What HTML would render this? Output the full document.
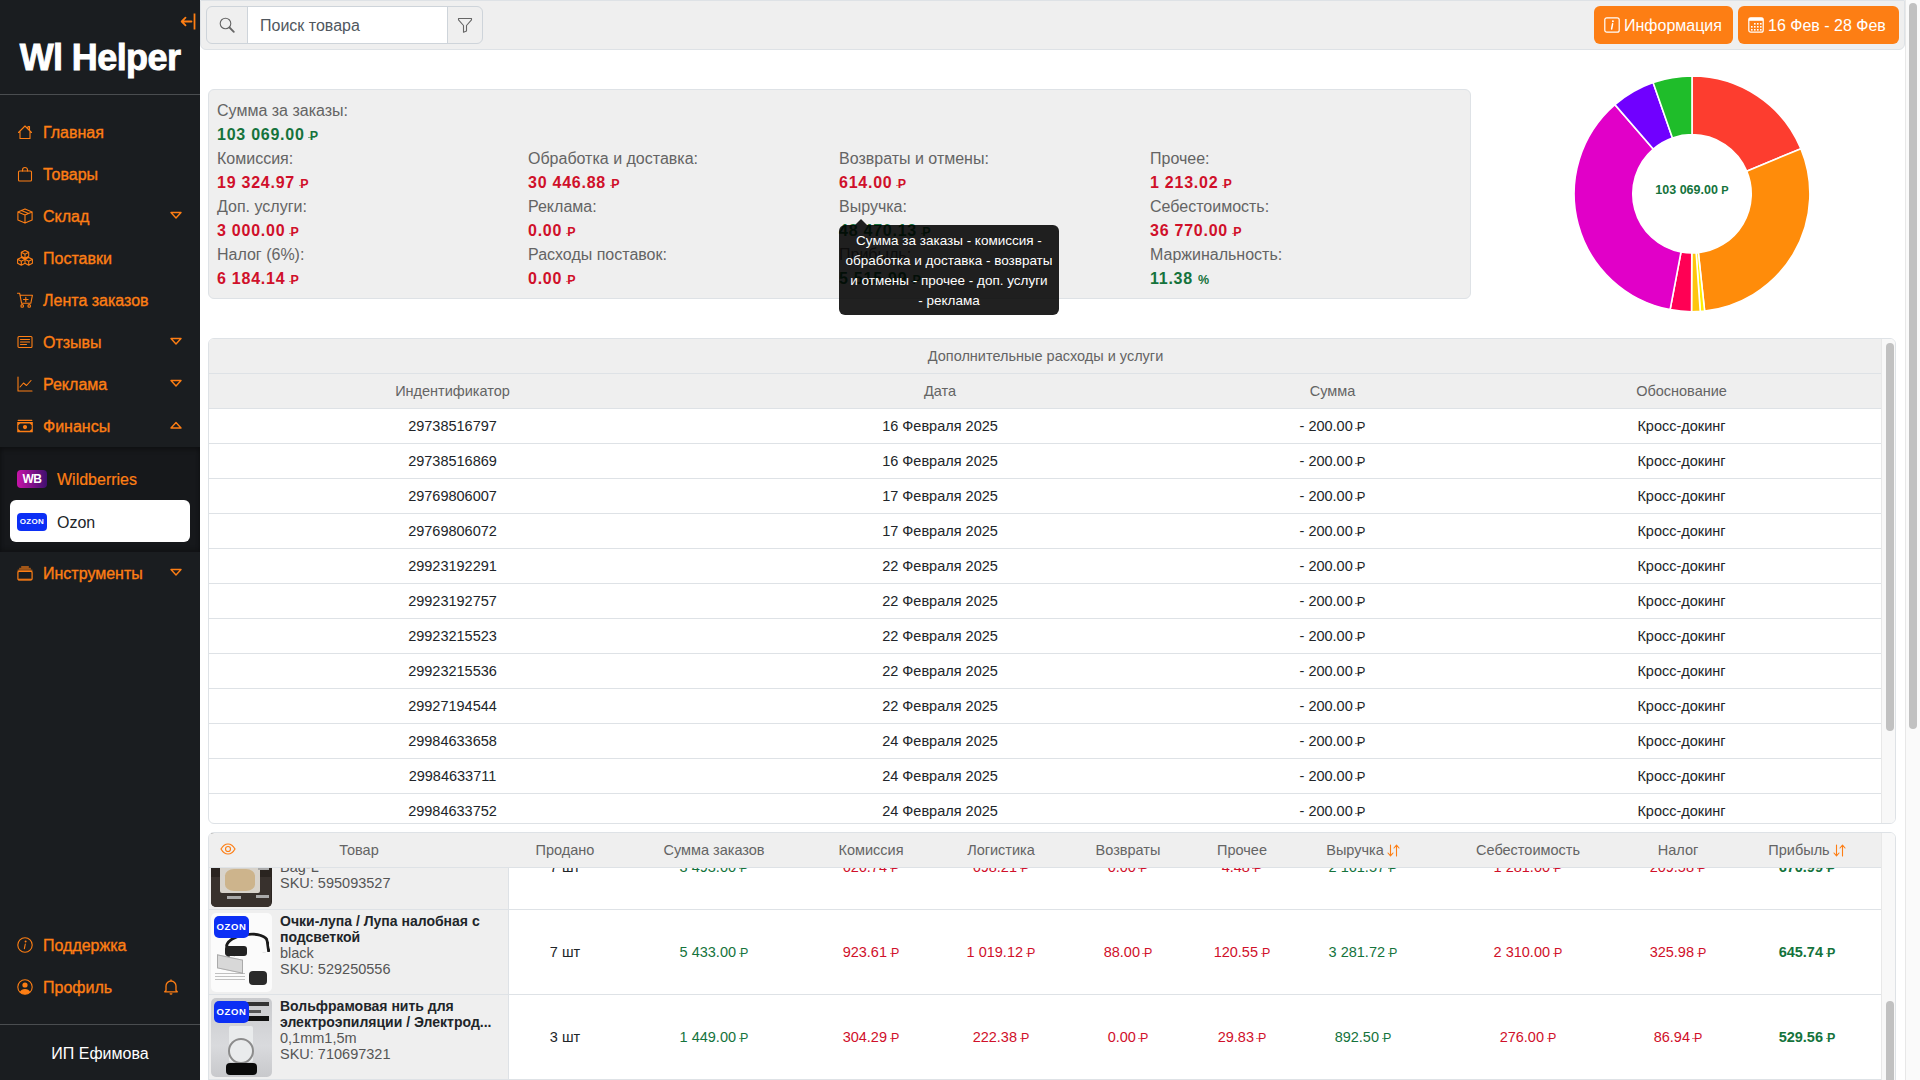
<!DOCTYPE html><html lang="ru"><head><meta charset="utf-8"><title>Wl Helper</title><style>
*{box-sizing:border-box;margin:0;padding:0}
html,body{width:1920px;height:1080px;overflow:hidden;background:#fff;font-family:"Liberation Sans",sans-serif;color:#212529}
.abs{position:absolute}
#sb{position:absolute;left:0;top:0;width:200px;height:1080px;background:#1a1d20}
#sb .logo{position:absolute;left:0;top:35px;width:200px;text-align:center;color:#fff;font-weight:700;font-size:36px;line-height:46px;letter-spacing:-0.6px;-webkit-text-stroke:0.9px #fff}
#sb .hr{position:absolute;left:0;width:200px;height:1px;background:#4a4d50}
.nav{position:absolute;left:0;width:200px;height:42px;color:#fd7e14;font-size:16px;line-height:42px}
.nav svg.ic{position:absolute;left:17px;top:13px}
.nav .tx{position:absolute;left:43px;top:1px;-webkit-text-stroke:0.35px #fd7e14;white-space:nowrap}
.nav svg.car{position:absolute;left:170px;top:16px}
#sub{position:absolute;left:0;top:447px;width:200px;height:105px;background:#16181b;box-shadow:inset 0 3px 4px rgba(0,0,0,.3), inset 0 -3px 4px rgba(0,0,0,.2)}
#hdr{position:absolute;left:200px;top:0;width:1705px;height:50px;background:#efefef;border:1px solid #dee2e6;border-radius:0 0 6px 6px}
.btn{position:absolute;top:6px;height:38px;background:#fd7e14;border-radius:6px;color:#fff;font-size:16px;line-height:40px;white-space:nowrap}
#card{position:absolute;left:208px;top:89px;width:1263px;height:210px;background:#efefef;border:1px solid #dee2e6;border-radius:6px}
.lb{position:absolute;font-size:16px;line-height:24px;color:#646464;white-space:nowrap}
.vl{position:absolute;font-size:16px;line-height:24px;font-weight:700;white-space:nowrap;letter-spacing:0.75px}
.g{color:#15733c}.r{color:#d0102a}
.rub{position:relative;font-size:12.5px;font-weight:700;letter-spacing:0}
.rub::after{content:"";position:absolute;left:-0.12em;width:0.5em;bottom:0.42em;height:1px;background:currentColor;opacity:.55}
.pct::after{display:none}
.tbox{position:absolute;left:208px;width:1688px;border:1px solid #dee2e6;border-radius:6px;overflow:hidden;background:#fff}
.row{position:absolute;left:0;border-bottom:1px solid #dee2e6}
.c{position:absolute;top:0;text-align:center;white-space:nowrap;font-size:14.5px}
.sbar{position:absolute;background:#f8f8f8;border-left:1px solid #e8e8e8}
.thumb{position:absolute;background:#c1c1c1;border-radius:4px}
#psb{position:absolute;left:1905px;top:0;width:15px;height:1080px;background:#fafafa;border-left:1px solid #e8e8e8}
#psb .th{position:absolute;left:3px;top:3px;width:8px;height:726px;background:#c1c1c1;border-radius:4px}
</style></head><body>
<div id="sb">
<svg class="abs" style="left:180px;top:13px" width="16" height="17" viewBox="0 0 16 17"><path d="M14.5 0.5v16" stroke="#fd7e14" stroke-width="1.8" fill="none"/><path d="M11.5 8.5H2M5.5 4.7L1.7 8.5L5.5 12.3" stroke="#fd7e14" stroke-width="1.8" fill="none" stroke-linecap="round" stroke-linejoin="round"/></svg>
<div class="logo">Wl Helper</div>
<div class="hr" style="top:94px"></div>
<div id="sub"></div>
<div class="nav" style="top:111px"><svg class="ic" width="16" height="16" viewBox="0 0 16 16"><path d="M1.5 8.5L8 2l6.5 6.5M3 7v7.5h10V7M11 4V2.5h1.5v3" stroke="#fd7e14" stroke-width="1.1" fill="none" stroke-linecap="round" stroke-linejoin="round"/></svg><span class="tx">Главная</span></div>
<div class="nav" style="top:153px"><svg class="ic" width="16" height="16" viewBox="0 0 16 16"><rect x="1.5" y="5" width="13" height="10" rx="1" stroke="#fd7e14" stroke-width="1.1" fill="none" stroke-linecap="round" stroke-linejoin="round"/><path d="M5.5 5V4a2.5 2.5 0 0 1 5 0v1" stroke="#fd7e14" stroke-width="1.1" fill="none" stroke-linecap="round" stroke-linejoin="round"/></svg><span class="tx">Товары</span></div>
<div class="nav" style="top:195px"><svg class="ic" width="16" height="16" viewBox="0 0 16 16"><path d="M8 0.9L15.1 3.9V12.1L8 15.1 0.9 12.1V3.9z M0.9 3.9L8 6.9 15.1 3.9 M8 6.9V15.1 M4.4 2.4L11.6 5.4" stroke="#fd7e14" stroke-width="1.1" fill="none" stroke-linecap="round" stroke-linejoin="round"/></svg><span class="tx">Склад</span><svg class="car" width="12" height="9" viewBox="0 0 12 9"><path d="M1 1.5h10L6 7z" stroke="#fd7e14" stroke-width="1.4" fill="none" stroke-linejoin="round"/></svg></div>
<div class="nav" style="top:237px"><svg class="ic" width="16" height="16" viewBox="0 0 16 16"><path d="M8 0.3999999999999999L11.7 2.3499999999999996V6.25L8 8.2L4.3 6.25V2.3499999999999996z M4.3 2.3499999999999996L8 4.3L11.7 2.3499999999999996 M8 4.3V8.2 M4.3 7.4L8.0 9.350000000000001V13.25L4.3 15.200000000000001L0.5999999999999996 13.25V9.350000000000001z M0.5999999999999996 9.350000000000001L4.3 11.3L8.0 9.350000000000001 M4.3 11.3V15.200000000000001 M11.7 7.4L15.399999999999999 9.350000000000001V13.25L11.7 15.200000000000001L7.999999999999999 13.25V9.350000000000001z M7.999999999999999 9.350000000000001L11.7 11.3L15.399999999999999 9.350000000000001 M11.7 11.3V15.200000000000001" stroke="#fd7e14" stroke-width="1.1" fill="none" stroke-linecap="round" stroke-linejoin="round"/></svg><span class="tx">Поставки</span></div>
<div class="nav" style="top:279px"><svg class="ic" width="16" height="16" viewBox="0 0 16 16"><path d="M0.5 1.3h2.2l1.9 10h9.2l1.6-8H3.1 M8.8 5.2v4.6M6.5 7.5h4.6" stroke="#fd7e14" stroke-width="1.1" fill="none" stroke-linecap="round" stroke-linejoin="round"/><circle cx="5.2" cy="13.9" r="1.3" stroke="#fd7e14" stroke-width="1.1" fill="none" stroke-linecap="round" stroke-linejoin="round"/><circle cx="12.2" cy="13.9" r="1.3" stroke="#fd7e14" stroke-width="1.1" fill="none" stroke-linecap="round" stroke-linejoin="round"/></svg><span class="tx">Лента заказов</span></div>
<div class="nav" style="top:321px"><svg class="ic" width="16" height="16" viewBox="0 0 16 16"><rect x="1" y="2.5" width="14" height="11" rx="1" stroke="#fd7e14" stroke-width="1.1" fill="none" stroke-linecap="round" stroke-linejoin="round"/><path d="M3.5 5.5h9M3.5 8h9M3.5 10.5h6" stroke="#fd7e14" stroke-width="1.1" fill="none" stroke-linecap="round" stroke-linejoin="round"/></svg><span class="tx">Отзывы</span><svg class="car" width="12" height="9" viewBox="0 0 12 9"><path d="M1 1.5h10L6 7z" stroke="#fd7e14" stroke-width="1.4" fill="none" stroke-linejoin="round"/></svg></div>
<div class="nav" style="top:363px"><svg class="ic" width="16" height="16" viewBox="0 0 16 16"><path d="M1 1v14h14 M3 11l3.5-4 3 2.5L14 4.5" stroke="#fd7e14" stroke-width="1.1" fill="none" stroke-linecap="round" stroke-linejoin="round"/></svg><span class="tx">Реклама</span><svg class="car" width="12" height="9" viewBox="0 0 12 9"><path d="M1 1.5h10L6 7z" stroke="#fd7e14" stroke-width="1.4" fill="none" stroke-linejoin="round"/></svg></div>
<div class="nav" style="top:405px"><svg class="ic" style="top:14px" width="16" height="16" viewBox="0 0 16 16"><path d="M1.2 1.4H14.8" stroke="#fd7e14" stroke-width="1.2" stroke-linecap="round"/><path fill-rule="evenodd" fill="#fd7e14" d="M0.2 3H15.8V13.2H0.2z M3.2 4.4H12.8L14.7 6.2V10L12.8 11.8H3.2L1.3 10V6.2z"/><circle cx="8" cy="8.1" r="2.1" fill="#fd7e14"/></svg><span class="tx">Финансы</span><svg class="car" width="12" height="9" viewBox="0 0 12 9"><path d="M1 7L6 1.5 11 7z" stroke="#fd7e14" stroke-width="1.4" fill="none" stroke-linejoin="round"/></svg></div>
<div class="nav" style="top:552px"><svg class="ic" width="16" height="16" viewBox="0 0 16 16"><g fill="#fd7e14" opacity=".6"><rect x="4.2" y="1" width="7.6" height="2"/><rect x="2.2" y="2.8" width="11.6" height="2"/><rect x="0.6" y="4.6" width="14.8" height="2.2"/><rect x="1" y="13.6" width="14" height="1.8" rx=".8"/></g><rect x="0.9" y="6.3" width="14.2" height="8.6" rx="1.2" stroke="#fd7e14" stroke-width="1.2" fill="none"/></svg><span class="tx">Инструменты</span><svg class="car" width="12" height="9" viewBox="0 0 12 9"><path d="M1 1.5h10L6 7z" stroke="#fd7e14" stroke-width="1.4" fill="none" stroke-linejoin="round"/></svg></div>
<div class="nav" style="top:924px"><svg class="ic" width="16" height="16" viewBox="0 0 16 16"><circle cx="8" cy="8" r="7.2" stroke="#fd7e14" stroke-width="1.1" fill="none" stroke-linecap="round" stroke-linejoin="round"/><path d="M8.3 7l-.9 4.6" stroke="#fd7e14" stroke-width="1.1" fill="none" stroke-linecap="round" stroke-linejoin="round" stroke-width="1.6"/><circle cx="8.6" cy="4.6" r="1" fill="#fd7e14"/></svg><span class="tx">Поддержка</span></div>
<div class="nav" style="top:966px"><svg class="ic" width="16" height="16" viewBox="0 0 16 16"><circle cx="8" cy="8" r="7.2" stroke="#fd7e14" stroke-width="1.1" fill="none" stroke-linecap="round" stroke-linejoin="round"/><circle cx="8" cy="6" r="2.6" fill="#fd7e14"/><path d="M2.8 13c1-2 2.8-3 5.2-3s4.2 1 5.2 3A7 7 0 0 1 2.8 13z" fill="#fd7e14"/></svg><span class="tx">Профиль</span></div>
<svg class="abs" style="left:163px;top:978px" width="16" height="17" viewBox="0 0 16 17"><path d="M3 12.5V8a5 5 0 0 1 10 0v4.5l1.3 1.3H1.7z M8 1.5v1.5" stroke="#fd7e14" stroke-width="1.3" fill="none" stroke-linejoin="round"/><path d="M6.5 15.2a1.5 1.5 0 0 0 3 0z" fill="#fd7e14"/></svg>
<div class="abs" style="left:17px;top:470px;width:30px;height:18px;border-radius:4px;background:linear-gradient(90deg,#c614a8,#3f0f6e);color:#fff;font-size:12px;font-weight:700;line-height:18px;text-align:center;letter-spacing:-0.5px">WB</div>
<div class="abs" style="left:57px;top:468px;color:#fd7e14;font-size:16px;line-height:24px;-webkit-text-stroke:0.2px #fd7e14">Wildberries</div>
<div class="abs" style="left:10px;top:500px;width:180px;height:42px;background:#fff;border-radius:6px"></div>
<div class="abs" style="left:17px;top:513px;width:30px;height:18px;border-radius:4px;background:#0c2ff5;color:#fff;font-size:8px;font-weight:700;line-height:18px;text-align:center;letter-spacing:0.3px">OZON</div>
<div class="abs" style="left:57px;top:511px;color:#212529;font-size:16px;line-height:24px">Ozon</div>
<div class="hr" style="top:1024px"></div>
<div class="abs" style="left:0;top:1042px;width:200px;text-align:center;color:#fff;font-size:16px;line-height:24px">ИП Ефимова</div>
</div>
<div id="hdr"></div>
<div class="abs" style="left:206px;top:6px;width:277px;height:38px;border:1px solid #ced4da;border-radius:6px;background:#efefef"></div>
<div class="abs" style="left:247px;top:6px;width:201px;height:38px;border:1px solid #ced4da;background:#fff"></div>
<svg class="abs" style="left:219px;top:17px" width="16" height="16" viewBox="0 0 16 16"><circle cx="6.5" cy="6.5" r="5.3" stroke="#666" stroke-width="1.1" fill="none"/><path d="M10.5 10.5L14.8 14.8" stroke="#666" stroke-width="1.8" stroke-linecap="round"/></svg>
<div class="abs" style="left:260px;top:14px;font-size:16px;line-height:24px;color:#50575e;white-space:nowrap">Поиск товара</div>
<svg class="abs" style="left:457px;top:17px" width="16" height="16" viewBox="0 0 16 16"><path d="M1.5 1.5h13v1.3L9.5 8.5v5.5l-3 1.3V8.5L1.5 2.8z" stroke="#666" stroke-width="1.1" fill="none" stroke-linejoin="round"/></svg>
<div class="btn" style="left:1594px;width:139px"><svg class="abs" style="left:10px;top:11px" width="16" height="16" viewBox="0 0 16 16"><rect x="0.8" y="0.8" width="14.4" height="14.4" rx="2" stroke="#fff" stroke-width="1.2" fill="none"/><path d="M8.6 6.8L7.6 12" stroke="#fff" stroke-width="1.5" stroke-linecap="round"/><circle cx="8.9" cy="4.3" r="0.95" fill="#fff"/></svg><span class="abs" style="left:30px;top:0">Информация</span></div>
<div class="btn" style="left:1738px;width:161px"><svg class="abs" style="left:10px;top:11px" width="16" height="16" viewBox="0 0 16 16"><rect x="0.8" y="0.8" width="14.4" height="14.4" rx="2" stroke="#fff" stroke-width="1.2" fill="none"/><rect x="0.8" y="0.8" width="14.4" height="3" fill="#fff"/><rect x="6" y="6" width="1.6" height="1.6" fill="#fff"/><rect x="9" y="6" width="1.6" height="1.6" fill="#fff"/><rect x="12" y="6" width="1.6" height="1.6" fill="#fff"/><rect x="3" y="9" width="1.6" height="1.6" fill="#fff"/><rect x="6" y="9" width="1.6" height="1.6" fill="#fff"/><rect x="9" y="9" width="1.6" height="1.6" fill="#fff"/><rect x="12" y="9" width="1.6" height="1.6" fill="#fff"/><rect x="3" y="12" width="1.6" height="1.6" fill="#fff"/><rect x="6" y="12" width="1.6" height="1.6" fill="#fff"/><rect x="9" y="12" width="1.6" height="1.6" fill="#fff"/><rect x="12" y="12" width="1.6" height="1.6" fill="#fff"/></svg><span class="abs" style="left:30px;top:0">16 Фев - 28 Фев</span></div>
<div id="card"></div>
<div class="lb" style="left:217px;top:99px">Сумма за заказы:</div>
<div class="vl g" style="left:217px;top:123px">103 069.00 <span class="rub">P</span></div>
<div class="lb" style="left:217px;top:147px">Комиссия:</div>
<div class="vl r" style="left:217px;top:171px">19 324.97 <span class="rub">P</span></div>
<div class="lb" style="left:528px;top:147px">Обработка и доставка:</div>
<div class="vl r" style="left:528px;top:171px">30 446.88 <span class="rub">P</span></div>
<div class="lb" style="left:839px;top:147px">Возвраты и отмены:</div>
<div class="vl r" style="left:839px;top:171px">614.00 <span class="rub">P</span></div>
<div class="lb" style="left:1150px;top:147px">Прочее:</div>
<div class="vl r" style="left:1150px;top:171px">1 213.02 <span class="rub">P</span></div>
<div class="lb" style="left:217px;top:195px">Доп. услуги:</div>
<div class="vl r" style="left:217px;top:219px">3 000.00 <span class="rub">P</span></div>
<div class="lb" style="left:528px;top:195px">Реклама:</div>
<div class="vl r" style="left:528px;top:219px">0.00 <span class="rub">P</span></div>
<div class="lb" style="left:839px;top:195px">Выручка:</div>
<div class="vl g" style="left:839px;top:219px">48 470.13 <span class="rub">P</span></div>
<div class="lb" style="left:1150px;top:195px">Себестоимость:</div>
<div class="vl r" style="left:1150px;top:219px">36 770.00 <span class="rub">P</span></div>
<div class="lb" style="left:217px;top:243px">Налог (6%):</div>
<div class="vl r" style="left:217px;top:267px">6 184.14 <span class="rub">P</span></div>
<div class="lb" style="left:528px;top:243px">Расходы поставок:</div>
<div class="vl r" style="left:528px;top:267px">0.00 <span class="rub">P</span></div>
<div class="lb" style="left:839px;top:243px">Прибыль:</div>
<div class="vl g" style="left:839px;top:267px">5 515.99 <span class="rub">P</span></div>
<div class="lb" style="left:1150px;top:243px">Маржинальность:</div>
<div class="vl g" style="left:1150px;top:267px">11.38 <span class="rub pct">%</span></div>
<div class="abs" style="left:839px;top:225px;width:220px;height:90px;background:rgba(0,0,0,.87);border-radius:6px;color:#fff;font-size:13.5px;line-height:20px;text-align:center;padding-top:6px">Сумма за заказы - комиссия -<br>обработка и доставка - возвраты<br>и отмены - прочее - доп. услуги<br>- реклама</div>
<div class="abs" style="left:855px;top:219px;width:0;height:0;border-left:6px solid transparent;border-right:6px solid transparent;border-bottom:6px solid rgba(0,0,0,.87)"></div>
<svg class="abs" style="left:1560px;top:60px" width="260" height="260" viewBox="1560 60 260 260"><path d="M1692.00 75.90A117.9 117.9 0 0 1 1800.92 148.68L1746.69 171.14A59.2 59.2 0 0 0 1692.00 134.60Z" fill="#fd3d2f" stroke="#fff" stroke-width="1.6" stroke-linejoin="miter"/><path d="M1800.92 148.68A117.9 117.9 0 0 1 1704.64 311.02L1698.35 252.66A59.2 59.2 0 0 0 1746.69 171.14Z" fill="#ff8c0a" stroke="#fff" stroke-width="1.6" stroke-linejoin="miter"/><path d="M1704.64 311.02A117.9 117.9 0 0 1 1700.25 311.41L1696.14 252.85A59.2 59.2 0 0 0 1698.35 252.66Z" fill="#ffee00" stroke="#fff" stroke-width="1.6" stroke-linejoin="miter"/><path d="M1700.25 311.41A117.9 117.9 0 0 1 1691.54 311.70L1691.77 253.00A59.2 59.2 0 0 0 1696.14 252.85Z" fill="#ffc50d" stroke="#fff" stroke-width="1.6" stroke-linejoin="miter"/><path d="M1691.54 311.70A117.9 117.9 0 0 1 1670.10 309.65L1681.01 251.97A59.2 59.2 0 0 0 1691.77 253.00Z" fill="#ff0054" stroke="#fff" stroke-width="1.6" stroke-linejoin="miter"/><path d="M1670.10 309.65A117.9 117.9 0 0 1 1614.86 104.64L1653.27 149.03A59.2 59.2 0 0 0 1681.01 251.97Z" fill="#e100c8" stroke="#fff" stroke-width="1.6" stroke-linejoin="miter"/><path d="M1614.86 104.64A117.9 117.9 0 0 1 1653.10 82.50L1672.47 137.92A59.2 59.2 0 0 0 1653.27 149.03Z" fill="#7000ff" stroke="#fff" stroke-width="1.6" stroke-linejoin="miter"/><path d="M1653.10 82.50A117.9 117.9 0 0 1 1692.00 75.90L1692.00 134.60A59.2 59.2 0 0 0 1672.47 137.92Z" fill="#1fbd2a" stroke="#fff" stroke-width="1.6" stroke-linejoin="miter"/></svg>
<div class="abs" style="left:1592px;top:182px;width:200px;text-align:center;color:#15733c;font-size:12.5px;font-weight:700;line-height:16px;white-space:nowrap">103 069.00 <span style="font-size:11px">P</span></div>
<div class="tbox" style="top:338px;height:486px">
<div class="row" style="top:0;width:1673px;height:35px;background:#efefef"><div class="c" style="left:0;width:1673px;line-height:34px;color:#646464">Дополнительные расходы и услуги</div></div>
<div class="row" style="top:35px;width:1673px;height:35px;background:#efefef"><div class="c" style="left:0px;width:487px;line-height:34px;color:#646464">Индентификатор</div><div class="c" style="left:487px;width:488px;line-height:34px;color:#646464">Дата</div><div class="c" style="left:975px;width:297px;line-height:34px;color:#646464">Сумма</div><div class="c" style="left:1272px;width:401px;line-height:34px;color:#646464">Обоснование</div></div>
<div class="row" style="top:70px;width:1673px;height:35px"><div class="c" style="left:0px;width:487px;line-height:34px;color:#212529">29738516797</div><div class="c" style="left:487px;width:488px;line-height:34px;color:#212529">16 Февраля 2025</div><div class="c" style="left:975px;width:297px;line-height:34px;color:#212529">- 200.00 <span class="rub" style="font-weight:400;font-size:13px">P</span></div><div class="c" style="left:1272px;width:401px;line-height:34px;color:#212529">Кросс-докинг</div></div>
<div class="row" style="top:105px;width:1673px;height:35px"><div class="c" style="left:0px;width:487px;line-height:34px;color:#212529">29738516869</div><div class="c" style="left:487px;width:488px;line-height:34px;color:#212529">16 Февраля 2025</div><div class="c" style="left:975px;width:297px;line-height:34px;color:#212529">- 200.00 <span class="rub" style="font-weight:400;font-size:13px">P</span></div><div class="c" style="left:1272px;width:401px;line-height:34px;color:#212529">Кросс-докинг</div></div>
<div class="row" style="top:140px;width:1673px;height:35px"><div class="c" style="left:0px;width:487px;line-height:34px;color:#212529">29769806007</div><div class="c" style="left:487px;width:488px;line-height:34px;color:#212529">17 Февраля 2025</div><div class="c" style="left:975px;width:297px;line-height:34px;color:#212529">- 200.00 <span class="rub" style="font-weight:400;font-size:13px">P</span></div><div class="c" style="left:1272px;width:401px;line-height:34px;color:#212529">Кросс-докинг</div></div>
<div class="row" style="top:175px;width:1673px;height:35px"><div class="c" style="left:0px;width:487px;line-height:34px;color:#212529">29769806072</div><div class="c" style="left:487px;width:488px;line-height:34px;color:#212529">17 Февраля 2025</div><div class="c" style="left:975px;width:297px;line-height:34px;color:#212529">- 200.00 <span class="rub" style="font-weight:400;font-size:13px">P</span></div><div class="c" style="left:1272px;width:401px;line-height:34px;color:#212529">Кросс-докинг</div></div>
<div class="row" style="top:210px;width:1673px;height:35px"><div class="c" style="left:0px;width:487px;line-height:34px;color:#212529">29923192291</div><div class="c" style="left:487px;width:488px;line-height:34px;color:#212529">22 Февраля 2025</div><div class="c" style="left:975px;width:297px;line-height:34px;color:#212529">- 200.00 <span class="rub" style="font-weight:400;font-size:13px">P</span></div><div class="c" style="left:1272px;width:401px;line-height:34px;color:#212529">Кросс-докинг</div></div>
<div class="row" style="top:245px;width:1673px;height:35px"><div class="c" style="left:0px;width:487px;line-height:34px;color:#212529">29923192757</div><div class="c" style="left:487px;width:488px;line-height:34px;color:#212529">22 Февраля 2025</div><div class="c" style="left:975px;width:297px;line-height:34px;color:#212529">- 200.00 <span class="rub" style="font-weight:400;font-size:13px">P</span></div><div class="c" style="left:1272px;width:401px;line-height:34px;color:#212529">Кросс-докинг</div></div>
<div class="row" style="top:280px;width:1673px;height:35px"><div class="c" style="left:0px;width:487px;line-height:34px;color:#212529">29923215523</div><div class="c" style="left:487px;width:488px;line-height:34px;color:#212529">22 Февраля 2025</div><div class="c" style="left:975px;width:297px;line-height:34px;color:#212529">- 200.00 <span class="rub" style="font-weight:400;font-size:13px">P</span></div><div class="c" style="left:1272px;width:401px;line-height:34px;color:#212529">Кросс-докинг</div></div>
<div class="row" style="top:315px;width:1673px;height:35px"><div class="c" style="left:0px;width:487px;line-height:34px;color:#212529">29923215536</div><div class="c" style="left:487px;width:488px;line-height:34px;color:#212529">22 Февраля 2025</div><div class="c" style="left:975px;width:297px;line-height:34px;color:#212529">- 200.00 <span class="rub" style="font-weight:400;font-size:13px">P</span></div><div class="c" style="left:1272px;width:401px;line-height:34px;color:#212529">Кросс-докинг</div></div>
<div class="row" style="top:350px;width:1673px;height:35px"><div class="c" style="left:0px;width:487px;line-height:34px;color:#212529">29927194544</div><div class="c" style="left:487px;width:488px;line-height:34px;color:#212529">22 Февраля 2025</div><div class="c" style="left:975px;width:297px;line-height:34px;color:#212529">- 200.00 <span class="rub" style="font-weight:400;font-size:13px">P</span></div><div class="c" style="left:1272px;width:401px;line-height:34px;color:#212529">Кросс-докинг</div></div>
<div class="row" style="top:385px;width:1673px;height:35px"><div class="c" style="left:0px;width:487px;line-height:34px;color:#212529">29984633658</div><div class="c" style="left:487px;width:488px;line-height:34px;color:#212529">24 Февраля 2025</div><div class="c" style="left:975px;width:297px;line-height:34px;color:#212529">- 200.00 <span class="rub" style="font-weight:400;font-size:13px">P</span></div><div class="c" style="left:1272px;width:401px;line-height:34px;color:#212529">Кросс-докинг</div></div>
<div class="row" style="top:420px;width:1673px;height:35px"><div class="c" style="left:0px;width:487px;line-height:34px;color:#212529">29984633711</div><div class="c" style="left:487px;width:488px;line-height:34px;color:#212529">24 Февраля 2025</div><div class="c" style="left:975px;width:297px;line-height:34px;color:#212529">- 200.00 <span class="rub" style="font-weight:400;font-size:13px">P</span></div><div class="c" style="left:1272px;width:401px;line-height:34px;color:#212529">Кросс-докинг</div></div>
<div class="row" style="top:455px;width:1673px;height:35px"><div class="c" style="left:0px;width:487px;line-height:34px;color:#212529">29984633752</div><div class="c" style="left:487px;width:488px;line-height:34px;color:#212529">24 Февраля 2025</div><div class="c" style="left:975px;width:297px;line-height:34px;color:#212529">- 200.00 <span class="rub" style="font-weight:400;font-size:13px">P</span></div><div class="c" style="left:1272px;width:401px;line-height:34px;color:#212529">Кросс-докинг</div></div>
<div class="row" style="top:490px;width:1673px;height:35px"><div class="c" style="left:0px;width:487px;line-height:34px;color:#212529">29984633800</div><div class="c" style="left:487px;width:488px;line-height:34px;color:#212529">24 Февраля 2025</div><div class="c" style="left:975px;width:297px;line-height:34px;color:#212529">- 200.00 <span class="rub" style="font-weight:400;font-size:13px">P</span></div><div class="c" style="left:1272px;width:401px;line-height:34px;color:#212529">Кросс-докинг</div></div>
<div class="sbar" style="left:1672px;top:0;width:15px;height:486px"><div class="thumb" style="left:3.5px;top:4px;width:8px;height:388px"></div></div>
</div>
<div class="tbox" style="top:832px;height:260px">
<div class="row" style="top:-8px;width:1673px;height:85px"></div>
<div class="abs" style="left:0;top:-8px;width:300px;height:85px;background:#efefef;border-right:1px solid #dee2e6;border-bottom:1px solid #dee2e6"></div>
<div class="c" style="left:296px;width:120px;top:23.5px;line-height:20px">7 шт</div>
<div class="c g" style="left:415px;width:180px;top:23.5px;line-height:20px;">3 493.00 <span class="rub" style="font-size:12.5px;font-weight:400">P</span></div>
<div class="c r" style="left:572px;width:180px;top:23.5px;line-height:20px;">626.74 <span class="rub" style="font-size:12.5px;font-weight:400">P</span></div>
<div class="c r" style="left:702px;width:180px;top:23.5px;line-height:20px;">698.21 <span class="rub" style="font-size:12.5px;font-weight:400">P</span></div>
<div class="c r" style="left:829px;width:180px;top:23.5px;line-height:20px;">0.00 <span class="rub" style="font-size:12.5px;font-weight:400">P</span></div>
<div class="c r" style="left:943px;width:180px;top:23.5px;line-height:20px;">4.48 <span class="rub" style="font-size:12.5px;font-weight:400">P</span></div>
<div class="c g" style="left:1064px;width:180px;top:23.5px;line-height:20px;">2 161.57 <span class="rub" style="font-size:12.5px;font-weight:400">P</span></div>
<div class="c r" style="left:1229px;width:180px;top:23.5px;line-height:20px;">1 281.00 <span class="rub" style="font-size:12.5px;font-weight:400">P</span></div>
<div class="c r" style="left:1379px;width:180px;top:23.5px;line-height:20px;">209.58 <span class="rub" style="font-size:12.5px;font-weight:400">P</span></div>
<div class="c g" style="left:1508px;width:180px;top:23.5px;line-height:20px;font-weight:700;">670.99 <span class="rub" style="font-size:12.5px;">P</span></div>
<div class="row" style="top:77px;width:1673px;height:85px"></div>
<div class="abs" style="left:0;top:77px;width:300px;height:85px;background:#efefef;border-right:1px solid #dee2e6;border-bottom:1px solid #dee2e6"></div>
<div class="c" style="left:296px;width:120px;top:108.5px;line-height:20px">7 шт</div>
<div class="c g" style="left:415px;width:180px;top:108.5px;line-height:20px;">5 433.00 <span class="rub" style="font-size:12.5px;font-weight:400">P</span></div>
<div class="c r" style="left:572px;width:180px;top:108.5px;line-height:20px;">923.61 <span class="rub" style="font-size:12.5px;font-weight:400">P</span></div>
<div class="c r" style="left:702px;width:180px;top:108.5px;line-height:20px;">1 019.12 <span class="rub" style="font-size:12.5px;font-weight:400">P</span></div>
<div class="c r" style="left:829px;width:180px;top:108.5px;line-height:20px;">88.00 <span class="rub" style="font-size:12.5px;font-weight:400">P</span></div>
<div class="c r" style="left:943px;width:180px;top:108.5px;line-height:20px;">120.55 <span class="rub" style="font-size:12.5px;font-weight:400">P</span></div>
<div class="c g" style="left:1064px;width:180px;top:108.5px;line-height:20px;">3 281.72 <span class="rub" style="font-size:12.5px;font-weight:400">P</span></div>
<div class="c r" style="left:1229px;width:180px;top:108.5px;line-height:20px;">2 310.00 <span class="rub" style="font-size:12.5px;font-weight:400">P</span></div>
<div class="c r" style="left:1379px;width:180px;top:108.5px;line-height:20px;">325.98 <span class="rub" style="font-size:12.5px;font-weight:400">P</span></div>
<div class="c g" style="left:1508px;width:180px;top:108.5px;line-height:20px;font-weight:700;">645.74 <span class="rub" style="font-size:12.5px;">P</span></div>
<div class="row" style="top:162px;width:1673px;height:85px"></div>
<div class="abs" style="left:0;top:162px;width:300px;height:85px;background:#efefef;border-right:1px solid #dee2e6;border-bottom:1px solid #dee2e6"></div>
<div class="c" style="left:296px;width:120px;top:193.5px;line-height:20px">3 шт</div>
<div class="c g" style="left:415px;width:180px;top:193.5px;line-height:20px;">1 449.00 <span class="rub" style="font-size:12.5px;font-weight:400">P</span></div>
<div class="c r" style="left:572px;width:180px;top:193.5px;line-height:20px;">304.29 <span class="rub" style="font-size:12.5px;font-weight:400">P</span></div>
<div class="c r" style="left:702px;width:180px;top:193.5px;line-height:20px;">222.38 <span class="rub" style="font-size:12.5px;font-weight:400">P</span></div>
<div class="c r" style="left:829px;width:180px;top:193.5px;line-height:20px;">0.00 <span class="rub" style="font-size:12.5px;font-weight:400">P</span></div>
<div class="c r" style="left:943px;width:180px;top:193.5px;line-height:20px;">29.83 <span class="rub" style="font-size:12.5px;font-weight:400">P</span></div>
<div class="c g" style="left:1064px;width:180px;top:193.5px;line-height:20px;">892.50 <span class="rub" style="font-size:12.5px;font-weight:400">P</span></div>
<div class="c r" style="left:1229px;width:180px;top:193.5px;line-height:20px;">276.00 <span class="rub" style="font-size:12.5px;font-weight:400">P</span></div>
<div class="c r" style="left:1379px;width:180px;top:193.5px;line-height:20px;">86.94 <span class="rub" style="font-size:12.5px;font-weight:400">P</span></div>
<div class="c g" style="left:1508px;width:180px;top:193.5px;line-height:20px;font-weight:700;">529.56 <span class="rub" style="font-size:12.5px;">P</span></div>

<div class="abs" style="left:71px;top:-6px;line-height:16px;white-space:nowrap;font-weight:700;color:#212529;font-size:14px;">Пакеты зип-лок 35х25</div><div class="abs" style="left:71px;top:10px;line-height:16px;white-space:nowrap;font-weight:700;color:#212529;font-size:14px;">см</div><div class="abs" style="left:71px;top:26px;line-height:16px;white-space:nowrap;color:#555;font-size:14.5px;">Bag-L</div><div class="abs" style="left:71px;top:42px;line-height:16px;white-space:nowrap;color:#555;font-size:14.5px;">SKU: 595093527</div>
<div class="abs" style="left:71px;top:80px;line-height:16px;white-space:nowrap;font-weight:700;color:#212529;font-size:14px;">Очки-лупа / Лупа налобная с</div><div class="abs" style="left:71px;top:96px;line-height:16px;white-space:nowrap;font-weight:700;color:#212529;font-size:14px;">подсветкой</div><div class="abs" style="left:71px;top:112px;line-height:16px;white-space:nowrap;color:#555;font-size:14.5px;">black</div><div class="abs" style="left:71px;top:128px;line-height:16px;white-space:nowrap;color:#555;font-size:14.5px;">SKU: 529250556</div>
<div class="abs" style="left:71px;top:165px;line-height:16px;white-space:nowrap;font-weight:700;color:#212529;font-size:14px;">Вольфрамовая нить для</div><div class="abs" style="left:71px;top:181px;line-height:16px;white-space:nowrap;font-weight:700;color:#212529;font-size:14px;">электроэпиляции / Электрод...</div><div class="abs" style="left:71px;top:197px;line-height:16px;white-space:nowrap;color:#555;font-size:14.5px;">0,1mm1,5m</div><div class="abs" style="left:71px;top:213px;line-height:16px;white-space:nowrap;color:#555;font-size:14.5px;">SKU: 710697321</div>
<div class="abs" style="left:2px;top:-6px;width:61px;height:80px;border-radius:5px;background:#2a2420;overflow:hidden"><div class="abs" style="left:0;top:50px;width:60px;height:30px;background:#38312d"></div><div class="abs" style="left:9px;top:20px;width:40px;height:46px;background:#d8d3cb;border-radius:2px"></div><div class="abs" style="left:14px;top:42px;width:30px;height:22px;background:#cdb48c;border-radius:30%"></div><div class="abs" style="left:47px;top:40px;width:11px;height:3px;background:#aaa"></div><div class="abs" style="left:16px;top:69px;width:14px;height:3px;background:#aaa"></div><div class="abs" style="left:45px;top:68px;width:13px;height:3px;background:#aaa"></div></div>
<div class="abs" style="left:2px;top:80px;width:61px;height:79px;border-radius:5px;background:#fbfbfb;overflow:hidden"><div class="abs" style="left:14px;top:20px;width:44px;height:22px;border:3px solid #1a1a1a;border-bottom:none;border-radius:50% 50% 0 0;transform:rotate(-8deg)"></div><div class="abs" style="left:14px;top:33px;width:22px;height:10px;background:#222;border-radius:3px"></div><div class="abs" style="left:6px;top:44px;width:26px;height:14px;background:#d8d8d8;transform:skewY(12deg);border:1px solid #aaa"></div><div class="abs" style="left:38px;top:58px;width:18px;height:14px;background:#2a2a2a;border-radius:4px"></div><div class="abs" style="left:4px;top:60px;width:30px;height:8px;background:repeating-linear-gradient(#999 0 1px,transparent 1px 3px);opacity:.6"></div><div class="abs" style="left:3px;top:3px;width:35px;height:22px;background:#0c2ff5;border-radius:5px;color:#fff;font-size:9.5px;font-weight:700;line-height:22px;text-align:center;letter-spacing:0.6px">OZON</div></div>
<div class="abs" style="left:2px;top:165px;width:61px;height:79px;border-radius:5px;background:linear-gradient(#c9cacd,#d9dadd 60%,#c8c9cc);overflow:hidden"><div class="abs" style="left:28px;top:4px;width:30px;height:4px;background:#333"></div><div class="abs" style="left:28px;top:12px;width:22px;height:3px;background:#555"></div><div class="abs" style="left:30px;top:18px;width:28px;height:5px;background:#111"></div><div class="abs" style="left:18px;top:28px;width:24px;height:36px;background:#e9ebec;border-radius:2px"></div><div class="abs" style="left:17px;top:40px;width:26px;height:26px;border:2px solid #8c8c8c;border-radius:50%"></div><div class="abs" style="left:15px;top:65px;width:31px;height:12px;background:#0a0a0a;border-radius:4px"></div><div class="abs" style="left:3px;top:3px;width:35px;height:22px;background:#0c2ff5;border-radius:5px;color:#fff;font-size:9.5px;font-weight:700;line-height:22px;text-align:center;letter-spacing:0.6px">OZON</div></div>
<div class="row" style="top:0;width:1673px;height:35px;background:#efefef"><svg class="abs" style="left:11px;top:10px" width="16" height="12" viewBox="0 0 16 12"><path d="M1 6C3 2.5 5.5 1 8 1s5 1.5 7 5c-2 3.5-4.5 5-7 5S3 9.5 1 6z" stroke="#fd7e14" stroke-width="1.2" fill="none"/><circle cx="8" cy="6" r="2.5" stroke="#fd7e14" stroke-width="1.2" fill="none"/></svg><div class="c" style="left:0;width:300px;line-height:34px;color:#646464">Товар</div><div class="c" style="left:266px;width:180px;line-height:34px;color:#646464">Продано</div><div class="c" style="left:415px;width:180px;line-height:34px;color:#646464">Сумма заказов</div><div class="c" style="left:572px;width:180px;line-height:34px;color:#646464">Комиссия</div><div class="c" style="left:702px;width:180px;line-height:34px;color:#646464">Логистика</div><div class="c" style="left:829px;width:180px;line-height:34px;color:#646464">Возвраты</div><div class="c" style="left:943px;width:180px;line-height:34px;color:#646464">Прочее</div><div class="c" style="left:1064px;width:180px;line-height:34px;color:#646464">Выручка<svg style="display:inline-block;vertical-align:-2px;margin-left:3px" width="13" height="13" viewBox="0 0 13 13"><path d="M3.5 1v10.5M1 9l2.5 2.8L6 9M9.5 12V1.5M7 4l2.5-2.8L12 4" stroke="#fd7e14" stroke-width="1.1" fill="none" stroke-linecap="round" stroke-linejoin="round"/></svg></div><div class="c" style="left:1229px;width:180px;line-height:34px;color:#646464">Себестоимость</div><div class="c" style="left:1379px;width:180px;line-height:34px;color:#646464">Налог</div><div class="c" style="left:1508px;width:180px;line-height:34px;color:#646464">Прибыль<svg style="display:inline-block;vertical-align:-2px;margin-left:3px" width="13" height="13" viewBox="0 0 13 13"><path d="M3.5 1v10.5M1 9l2.5 2.8L6 9M9.5 12V1.5M7 4l2.5-2.8L12 4" stroke="#fd7e14" stroke-width="1.1" fill="none" stroke-linecap="round" stroke-linejoin="round"/></svg></div></div>
<div class="sbar" style="left:1672px;top:0;width:15px;height:260px"><div class="thumb" style="left:3.5px;top:168px;width:8px;height:90px"></div></div>
</div>
<div id="psb"><div class="th"></div></div>
</body></html>
